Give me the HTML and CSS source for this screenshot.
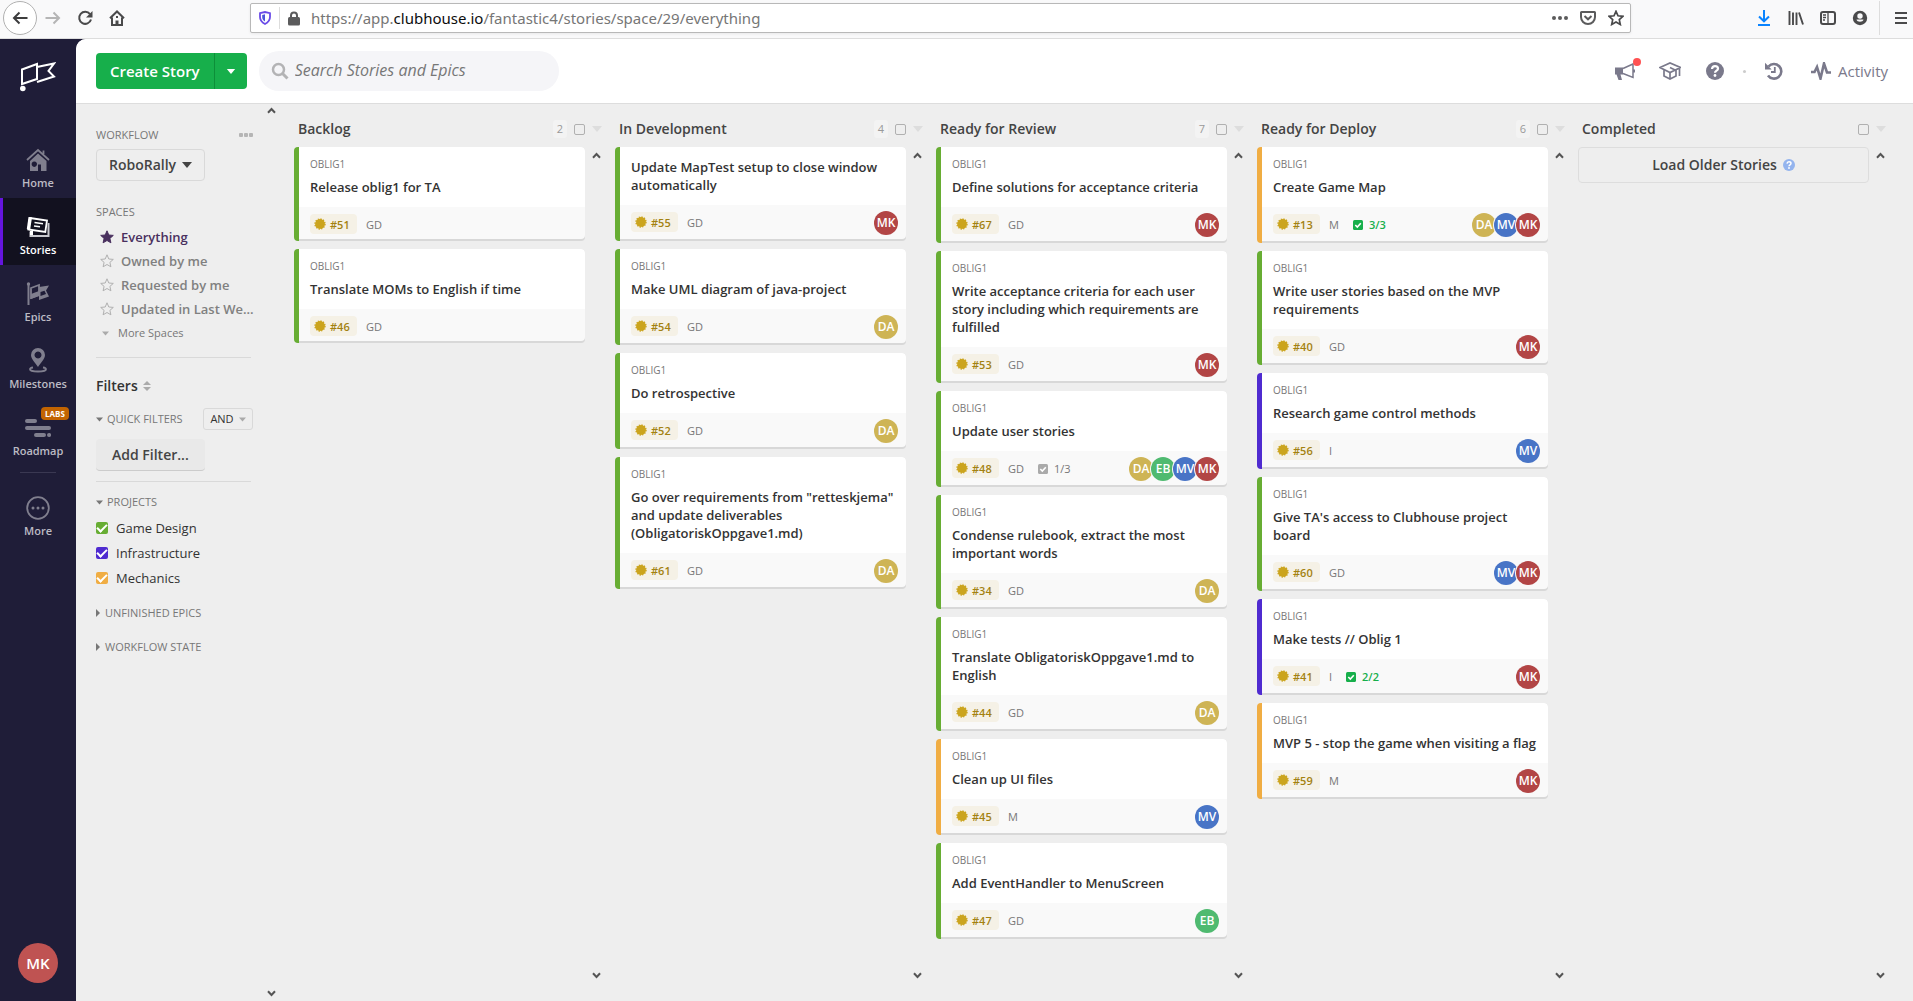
FILE: index.html
```html
<!DOCTYPE html>
<html lang="en">
<head>
<meta charset="utf-8">
<title>Stories | Clubhouse</title>
<link rel="stylesheet" href="styles.css">
</head>
<body>
<svg class="defs" aria-hidden="true">
  <symbol id="i-up" viewBox="0 0 9 7"><path d="M1 5.8 4.5 2 8 5.8" fill="none" stroke="currentColor" stroke-width="2"/></symbol>
  <symbol id="i-down" viewBox="0 0 9 7"><path d="M1 1.2 4.5 5 8 1.2" fill="none" stroke="currentColor" stroke-width="2"/></symbol>
  <symbol id="i-caret" viewBox="0 0 10 6"><path d="M0 0h10L5 6z" fill="currentColor"/></symbol>
  <symbol id="i-chore" viewBox="0 0 12 12"><circle cx="6" cy="6" r="4.9" fill="currentColor"/><circle cx="6" cy="6" r="5" fill="none" stroke="currentColor" stroke-width="1.4" stroke-dasharray="1.3 1.3"/></symbol>
  <symbol id="i-task" viewBox="0 0 10 10"><rect width="10" height="10" rx="1.5" fill="currentColor"/><path d="M2.3 5 4.3 7 7.8 3.2" fill="none" stroke="#fff" stroke-width="1.6"/></symbol>
  <symbol id="i-star" viewBox="0 0 14 14"><path d="M7 .8 8.800 5l4.500.4-3.400 3 1 4.400L7 10.500l-3.900 2.300 1-4.400-3.400-3L5.200 5z" stroke="currentColor"/></symbol>
</svg>

<div class="browser">
  <button class="bb back" aria-label="Back"><svg width="16" height="14" viewBox="0 0 16 14"><path d="M15.500 7H2M7.500 1.500 2 7l5.500 5.500" fill="none" stroke="#3d3d3e" stroke-width="2"/></svg></button>
  <button class="bb fwd" aria-label="Forward"><svg width="16" height="14" viewBox="0 0 16 14"><path d="M.5 7H14M8.500 1.500 14 7l-5.500 5.500" fill="none" stroke="#b5b5b5" stroke-width="2"/></svg></button>
  <button class="bb" aria-label="Reload"><svg width="16" height="16" viewBox="0 0 16 16"><path d="M13 4.200A6 6 0 1 0 14 9.500" fill="none" stroke="#4a4a4b" stroke-width="2"/><path d="M15.500 1v6.500H9z" fill="#4a4a4b"/></svg></button>
  <button class="bb" aria-label="Home page"><svg width="16" height="16" viewBox="0 0 16 16"><path d="M1 8.300 8 1.500l7 6.800M3 7.500V15h10V7.500" fill="none" stroke="#4a4a4b" stroke-width="2"/><path d="M6.500 15v-4.500h3V15zM7 6h2v2H7z" fill="#4a4a4b"/></svg></button>
  <div class="urlbar">
    <svg width="12" height="14" viewBox="0 0 12 14"><path d="M1 2.200 6 1l5 1.200V6c0 3.500-2 5.500-5 7-3-1.500-5-3.500-5-7z" fill="#fff" stroke="#6a4be8" stroke-width="1.800"/><path d="M6 3.300v7.300C4.300 9.500 3.200 8 3.200 6V3.900z" fill="#4b56d8"/></svg>
    <i class="vr"></i>
    <svg width="12" height="15" viewBox="0 0 12 15"><path d="M3 7V4.500a3 3 0 0 1 6 0V7" fill="none" stroke="#5b5b5c" stroke-width="2"/><rect y="6" width="12" height="8.500" rx="1.500" fill="#5b5b5c"/></svg>
    <span class="url">https://app.<b>clubhouse.io</b>/fantastic4/stories/space/29/everything</span>
    <span class="urlicons">
      <svg width="16" height="16" viewBox="0 0 16 16"><g fill="#5b5b5c"><circle cx="2" cy="8" r="2"/><circle cx="8" cy="8" r="2"/><circle cx="14" cy="8" r="2"/></g></svg>
      <svg width="16" height="16" viewBox="0 0 16 16"><path d="M1.500 2h13a.5.5 0 0 1 .5.500V7A7 7 0 0 1 1 7V2.500A.5.5 0 0 1 1.500 2zM4.500 6 8 9.300 11.500 6" fill="none" stroke="#5b5b5c" stroke-width="2"/></svg>
      <svg width="16" height="16" viewBox="0 0 16 16"><path d="m8 1.300 2 4.500 5 .5-3.700 3.300 1 4.900L8 12l-4.300 2.500 1-4.900L1 6.300l5-.5z" fill="none" stroke="#4a4a4b" stroke-width="1.700"/></svg>
    </span>
  </div>
  <div class="tools">
    <svg width="16" height="16" viewBox="0 0 16 16"><path d="M8 0v11M3 6.500 8 11.300l5-4.800M2 15h12" fill="none" stroke="#0a84ff" stroke-width="2"/></svg>
    <svg width="16" height="16" viewBox="0 0 16 16"><path d="M1.500 1v14M5 2.500V15M8.500 2.500V15M11 2.500 15 14.500" fill="none" stroke="#4a4a4b" stroke-width="1.900"/></svg>
    <svg width="16" height="16" viewBox="0 0 16 16"><rect x="1" y="2" width="14" height="12" rx="2" fill="none" stroke="#4a4a4b" stroke-width="2"/><path d="M8 2v12M3 5h3M3 7.500h3M3 10h2" stroke="#4a4a4b" stroke-width="1.300"/></svg>
    <svg width="16" height="16" viewBox="0 0 16 16"><circle cx="8" cy="8" r="7.200" fill="#4a4a4b"/><path d="M4.500 9.500h7c-.5 3-6.500 3-7 0z" fill="#f9f9fa"/><circle cx="8" cy="6" r="2.700" fill="#f9f9fa"/></svg>
    <i class="vr tall"></i>
    <svg width="12" height="14" viewBox="0 0 12 14"><path d="M0 2h12M0 7h12M0 12h12" stroke="#4a4a4b" stroke-width="2"/></svg>
  </div>
</div>

<div class="app">
  <nav class="nav">
    <a class="logo" href="#" aria-label="Clubhouse"><svg width="36" height="30" viewBox="0 0 36 30" fill="none" stroke="#fff" stroke-width="2"><path d="M2 7.500 17 2v15L2 22zM17 5l17-3.500-5.500 7.500 5.500 5.500-17 5.500"/><circle cx="2.800" cy="26.500" r="2.800" fill="#fff" stroke="none"/></svg></a>
    <a class="item" href="#"><svg width="24" height="24" viewBox="0 0 24 24"><path d="M1 12 12 2l11 10M17.500 6V2.500" fill="none" stroke="currentColor" stroke-width="1.800"/><path fill-rule="evenodd" d="M12 5.500 20.500 13v10h-5.500v-6.500h-3V23H4V13zM8.300 13.500a2.700 2.700 0 1 0 .01 0z" fill="currentColor"/></svg>Home</a>
    <a class="item on" href="#"><svg width="24" height="24" viewBox="0 0 24 24"><path d="M4 3 21 5.500 19.300 17 2.300 14.500z" fill="none" stroke="#fff" stroke-width="1.800"/><path d="M2.500 2 .8 14 4 15.500 6 2.500z" fill="#fff"/><path d="m8.500 7.500 8.500 1.200M8 11l6 .8" stroke="#fff" stroke-width="1.600"/><path d="M4.500 16.500V21h18V8" fill="none" stroke="#c9c9cf" stroke-width="2"/><path d="M4 16h3v4H4z" fill="#fff"/></svg>Stories</a>
    <a class="item" href="#"><svg width="24" height="24" viewBox="0 0 24 24"><path d="M2.500 1v22" stroke="currentColor" stroke-width="2"/><circle cx="2.500" cy="2" r="1.700" fill="currentColor"/><path d="m5 6 8-3v10l-8 3z" fill="none" stroke="currentColor" stroke-width="1.800"/><path d="m5 12 8-3v5l-8 3zM13 5l10-1.500-3 5 3 6-10 3.500z" fill="currentColor"/><path d="m14.500 10 4-1.300 1.500 3.300-5.500 2z" fill="#1f1d38"/></svg>Epics</a>
    <a class="item" href="#"><svg width="24" height="26" viewBox="0 0 24 26"><path fill-rule="evenodd" d="M12 1a7 7 0 0 1 7 7c0 4-4.500 8-7 12-2.500-4-7-8-7-12a7 7 0 0 1 7-7zm0 3.500a3.500 3.500 0 1 0 .01 0z" fill="currentColor"/><path d="M7 20.500c-2 .3-3 1-3 1.700 0 1.300 3.500 2.300 8 2.300s8-1 8-2.300c0-.7-1-1.400-3-1.700" fill="none" stroke="currentColor" stroke-width="1.800"/></svg>Milestones</a>
    <a class="item" href="#"><svg width="26" height="24" viewBox="0 0 26 24"><path d="M2 5h8M2 12h22M11 19h8M24 19h.1" stroke="currentColor" stroke-width="4" stroke-linecap="round"/></svg>Roadmap<span class="labs">LABS</span></a>
    <hr>
    <a class="item more" href="#"><svg width="24" height="24" viewBox="0 0 24 24"><circle cx="12" cy="12" r="10.800" fill="none" stroke="currentColor" stroke-width="1.800"/><g fill="currentColor"><circle cx="7" cy="12" r="1.500"/><circle cx="12" cy="12" r="1.500"/><circle cx="17" cy="12" r="1.500"/></g></svg>More</a>
    <button class="me">MK</button>
  </nav>

  <div class="main">
    <header class="top">
      <div class="create"><button>Create Story</button><button aria-label="More create options"><svg width="10" height="5"><use href="#i-caret"/></svg></button></div>
      <label class="search"><svg width="18" height="18" viewBox="0 0 18 18"><circle cx="7.500" cy="7.500" r="5.500" fill="none" stroke="#b3b3b5" stroke-width="2.500"/><path d="m11.500 11.500 5 5" stroke="#b3b3b5" stroke-width="3"/></svg><input type="search" placeholder="Search Stories and Epics" aria-label="Search Stories and Epics"></label>
      <div class="actions">
        <button class="mega" aria-label="News"><svg width="22" height="20" viewBox="0 0 22 20"><path d="M1 6.500h8v7H6.500l1.500 5.500H4.500l-2-5.500H1z" fill="currentColor"/><path d="M9 7.500 19 3v13.500L9 12.500" fill="none" stroke="currentColor" stroke-width="1.500"/><path d="M19 8.500h2v3h-2z" fill="currentColor"/></svg><i></i></button>
        <button aria-label="Learn"><svg width="22" height="20" viewBox="0 0 22 20" fill="none" stroke="currentColor" stroke-width="1.700"><path d="M1 6.500 11 2l10.500 4.500L11 11.500zM5 9v6l6 3 6-3V9M11 6.500l5 2.500M20.500 7v8"/><path d="m11 12v5"/></svg></button>
        <button aria-label="Help"><svg width="18" height="18" viewBox="0 0 18 18"><circle cx="9" cy="9" r="9" fill="currentColor"/><path d="M6 7c.2-2 1.500-2.800 3-2.800 1.700 0 3 1 3 2.500C12 8.700 9 8.700 9 10.800" fill="none" stroke="#fff" stroke-width="2.200"/><circle cx="9" cy="13.500" r="1.400" fill="#fff"/></svg></button>
        <i class="sep"></i>
        <button aria-label="History"><svg width="18" height="18" viewBox="0 0 18 18"><path d="M3.500 4.500A7.300 7.300 0 1 1 3 13.500" fill="none" stroke="currentColor" stroke-width="2.600"/><path d="M0 .8v6.700h6.700z" fill="currentColor"/><path d="M9.800 5v5H6" fill="none" stroke="currentColor" stroke-width="1.800"/></svg></button>
        <button class="activity"><svg width="20" height="18" viewBox="0 0 20 18"><path d="M0 10h3.500L6 5l3.500 11.500L13 1.500l3 9h4" fill="none" stroke="currentColor" stroke-width="2.600"/></svg>Activity</button>
      </div>
    </header>

    <div class="work">
      <aside class="side">
        <div class="panel">
          <div class="row h"><h2>Workflow</h2><button class="dots" aria-label="Workflow options"><i></i><i></i><i></i></button></div>
          <button class="wf">RoboRally <svg width="10" height="6"><use href="#i-caret"/></svg></button>
          <h2 class="sp">Spaces</h2>
          <a class="space cur" href="#"><svg width="14" height="14"><use href="#i-star"/></svg>Everything</a>
          <a class="space" href="#"><svg width="14" height="14"><use href="#i-star"/></svg>Owned by me</a>
          <a class="space" href="#"><svg width="14" height="14"><use href="#i-star"/></svg>Requested by me</a>
          <a class="space" href="#"><svg width="14" height="14"><use href="#i-star"/></svg>Updated in Last We...</a>
          <a class="morespaces" href="#"><svg width="7" height="5"><use href="#i-caret"/></svg>More Spaces</a>
          <hr>
          <h1>Filters <svg width="8" height="10" viewBox="0 0 8 10"><path d="M0 4h8L4 0zM0 6h8l-4 4z" fill="#aaa"/></svg></h1>
          <div class="row q"><h2><svg width="7" height="5"><use href="#i-caret"/></svg>Quick Filters</h2><button class="and">AND <svg width="7" height="5"><use href="#i-caret"/></svg></button></div>
          <button class="addf">Add Filter...</button>
          <hr>
          <h2 class="fold"><svg width="7" height="5"><use href="#i-caret"/></svg>Projects</h2>
          <label class="proj green"><input type="checkbox" checked>Game Design</label>
          <label class="proj purple"><input type="checkbox" checked>Infrastructure</label>
          <label class="proj orange"><input type="checkbox" checked>Mechanics</label>
          <h2 class="fold shut"><svg width="4" height="8" viewBox="0 0 4 8"><path d="M0 0v8l4-4z" fill="currentColor"/></svg>Unfinished Epics</h2>
          <h2 class="fold shut"><svg width="4" height="8" viewBox="0 0 4 8"><path d="M0 0v8l4-4z" fill="currentColor"/></svg>Workflow State</h2>
        </div>
        <div class="rail"><svg width="9" height="7"><use href="#i-up"/></svg><svg width="9" height="7"><use href="#i-down"/></svg></div>
      </aside>

      <main class="board">
        <section class="col">
          <div class="head"><h3>Backlog</h3><span class="n">2</span><input type="checkbox" aria-label="Select all in Backlog"><svg width="10" height="6"><use href="#i-caret"/></svg></div>
          <div class="list">
            <div class="cards">
              <article class="card g"><div class="body"><p class="epic">OBLIG1</p><h4>Release oblig1 for TA</h4></div><div class="foot"><span class="id"><svg><use href="#i-chore"/></svg>#51</span><span class="pr">GD</span></div></article>
              <article class="card g"><div class="body"><p class="epic">OBLIG1</p><h4>Translate MOMs to English if time</h4></div><div class="foot"><span class="id"><svg><use href="#i-chore"/></svg>#46</span><span class="pr">GD</span></div></article>
            </div>
            <div class="rail"><svg width="9" height="7"><use href="#i-up"/></svg><svg width="9" height="7"><use href="#i-down"/></svg></div>
          </div>
        </section>

        <section class="col">
          <div class="head"><h3>In Development</h3><span class="n">4</span><input type="checkbox" aria-label="Select all in In Development"><svg width="10" height="6"><use href="#i-caret"/></svg></div>
          <div class="list">
            <div class="cards">
              <article class="card g"><div class="body"><h4>Update MapTest setup to close window automatically</h4></div><div class="foot"><span class="id"><svg><use href="#i-chore"/></svg>#55</span><span class="pr">GD</span><span class="who"><b class="mk">MK</b></span></div></article>
              <article class="card g"><div class="body"><p class="epic">OBLIG1</p><h4>Make UML diagram of java-project</h4></div><div class="foot"><span class="id"><svg><use href="#i-chore"/></svg>#54</span><span class="pr">GD</span><span class="who"><b class="da">DA</b></span></div></article>
              <article class="card g"><div class="body"><p class="epic">OBLIG1</p><h4>Do retrospective</h4></div><div class="foot"><span class="id"><svg><use href="#i-chore"/></svg>#52</span><span class="pr">GD</span><span class="who"><b class="da">DA</b></span></div></article>
              <article class="card g"><div class="body"><p class="epic">OBLIG1</p><h4>Go over requirements from "retteskjema" and update deliverables (ObligatoriskOppgave1.md)</h4></div><div class="foot"><span class="id"><svg><use href="#i-chore"/></svg>#61</span><span class="pr">GD</span><span class="who"><b class="da">DA</b></span></div></article>
            </div>
            <div class="rail"><svg width="9" height="7"><use href="#i-up"/></svg><svg width="9" height="7"><use href="#i-down"/></svg></div>
          </div>
        </section>

        <section class="col">
          <div class="head"><h3>Ready for Review</h3><span class="n">7</span><input type="checkbox" aria-label="Select all in Ready for Review"><svg width="10" height="6"><use href="#i-caret"/></svg></div>
          <div class="list">
            <div class="cards">
              <article class="card g"><div class="body"><p class="epic">OBLIG1</p><h4>Define solutions for acceptance criteria</h4></div><div class="foot"><span class="id"><svg><use href="#i-chore"/></svg>#67</span><span class="pr">GD</span><span class="who"><b class="mk">MK</b></span></div></article>
              <article class="card g"><div class="body"><p class="epic">OBLIG1</p><h4>Write acceptance criteria for each user story including which requirements are fulfilled</h4></div><div class="foot"><span class="id"><svg><use href="#i-chore"/></svg>#53</span><span class="pr">GD</span><span class="who"><b class="mk">MK</b></span></div></article>
              <article class="card g"><div class="body"><p class="epic">OBLIG1</p><h4>Update user stories</h4></div><div class="foot"><span class="id"><svg><use href="#i-chore"/></svg>#48</span><span class="pr">GD</span><span class="tasks"><svg><use href="#i-task"/></svg>1/3</span><span class="who"><b class="da">DA</b><b class="eb">EB</b><b class="mv">MV</b><b class="mk">MK</b></span></div></article>
              <article class="card g"><div class="body"><p class="epic">OBLIG1</p><h4>Condense rulebook, extract the most important words</h4></div><div class="foot"><span class="id"><svg><use href="#i-chore"/></svg>#34</span><span class="pr">GD</span><span class="who"><b class="da">DA</b></span></div></article>
              <article class="card g"><div class="body"><p class="epic">OBLIG1</p><h4>Translate ObligatoriskOppgave1.md to English</h4></div><div class="foot"><span class="id"><svg><use href="#i-chore"/></svg>#44</span><span class="pr">GD</span><span class="who"><b class="da">DA</b></span></div></article>
              <article class="card m"><div class="body"><p class="epic">OBLIG1</p><h4>Clean up UI files</h4></div><div class="foot"><span class="id"><svg><use href="#i-chore"/></svg>#45</span><span class="pr">M</span><span class="who"><b class="mv">MV</b></span></div></article>
              <article class="card g"><div class="body"><p class="epic">OBLIG1</p><h4>Add EventHandler to MenuScreen</h4></div><div class="foot"><span class="id"><svg><use href="#i-chore"/></svg>#47</span><span class="pr">GD</span><span class="who"><b class="eb">EB</b></span></div></article>
            </div>
            <div class="rail"><svg width="9" height="7"><use href="#i-up"/></svg><svg width="9" height="7"><use href="#i-down"/></svg></div>
          </div>
        </section>

        <section class="col">
          <div class="head"><h3>Ready for Deploy</h3><span class="n">6</span><input type="checkbox" aria-label="Select all in Ready for Deploy"><svg width="10" height="6"><use href="#i-caret"/></svg></div>
          <div class="list">
            <div class="cards">
              <article class="card m"><div class="body"><p class="epic">OBLIG1</p><h4>Create Game Map</h4></div><div class="foot"><span class="id"><svg><use href="#i-chore"/></svg>#13</span><span class="pr">M</span><span class="tasks done"><svg><use href="#i-task"/></svg>3/3</span><span class="who"><b class="da">DA</b><b class="mv">MV</b><b class="mk">MK</b></span></div></article>
              <article class="card g"><div class="body"><p class="epic">OBLIG1</p><h4>Write user stories based on the MVP requirements</h4></div><div class="foot"><span class="id"><svg><use href="#i-chore"/></svg>#40</span><span class="pr">GD</span><span class="who"><b class="mk">MK</b></span></div></article>
              <article class="card i"><div class="body"><p class="epic">OBLIG1</p><h4>Research game control methods</h4></div><div class="foot"><span class="id"><svg><use href="#i-chore"/></svg>#56</span><span class="pr">I</span><span class="who"><b class="mv">MV</b></span></div></article>
              <article class="card g"><div class="body"><p class="epic">OBLIG1</p><h4>Give TA's access to Clubhouse project board</h4></div><div class="foot"><span class="id"><svg><use href="#i-chore"/></svg>#60</span><span class="pr">GD</span><span class="who"><b class="mv">MV</b><b class="mk">MK</b></span></div></article>
              <article class="card i"><div class="body"><p class="epic">OBLIG1</p><h4>Make tests // Oblig 1</h4></div><div class="foot"><span class="id"><svg><use href="#i-chore"/></svg>#41</span><span class="pr">I</span><span class="tasks done"><svg><use href="#i-task"/></svg>2/2</span><span class="who"><b class="mk">MK</b></span></div></article>
              <article class="card m"><div class="body"><p class="epic">OBLIG1</p><h4>MVP 5 - stop the game when visiting a flag</h4></div><div class="foot"><span class="id"><svg><use href="#i-chore"/></svg>#59</span><span class="pr">M</span><span class="who"><b class="mk">MK</b></span></div></article>
            </div>
            <div class="rail"><svg width="9" height="7"><use href="#i-up"/></svg><svg width="9" height="7"><use href="#i-down"/></svg></div>
          </div>
        </section>

        <section class="col">
          <div class="head"><h3>Completed</h3><input type="checkbox" aria-label="Select all in Completed"><svg width="10" height="6"><use href="#i-caret"/></svg></div>
          <div class="list">
            <div class="cards"><button class="older">Load Older Stories <svg width="12" height="12" viewBox="0 0 18 18"><circle cx="9" cy="9" r="9" fill="#94b4ee"/><path d="M6 7c.2-2 1.500-2.800 3-2.800 1.700 0 3 1 3 2.500C12 8.700 9 8.700 9 10.800" fill="none" stroke="#fff" stroke-width="2.200"/><circle cx="9" cy="13.500" r="1.400" fill="#fff"/></svg></button></div>
            <div class="rail"><svg width="9" height="7"><use href="#i-up"/></svg><svg width="9" height="7"><use href="#i-down"/></svg></div>
          </div>
        </section>
      </main>
    </div>
  </div>
</div>
</body>
</html>
```
FILE: styles.css
```css
* { box-sizing: border-box; }
html, body { height: 100%; margin: 0; }
body {
  display: flex;
  flex-direction: column;
  min-height: 100vh;
  font-family: "Open Sans", "Noto Sans", sans-serif;
  font-size: 13px;
  line-height: 18px;
  color: #333;
  background: #1f1d38;
}
h1, h2, h3, h4, p { margin: 0; font-weight: 400; }
button { font: inherit; color: inherit; border: 0; padding: 0; background: none; display: flex; align-items: center; justify-content: center; }
a { color: inherit; text-decoration: none; }
svg { flex: none; display: block; }
hr { border: 0; border-top: 1px solid #d9d9d9; margin: 0; }
.defs { position: absolute; width: 0; height: 0; }

/* browser toolbar */
.browser { display: flex; align-items: center; height: 39px; padding: 0 6px 2px 3px; background: #f9f9fa; border-bottom: 1px solid #ddd; flex: none; }
.bb { width: 32px; height: 34px; }
.bb.back { width: 34px; border: 1px solid #b1b1b1; border-radius: 50%; background: #fff; }
.urlbar { display: flex; align-items: center; flex: 1; height: 30px; margin: 0 125px 0 117px; padding: 0 6px 0 8px; border: 1px solid #b8b8b8; border-radius: 2px; background: #fff; box-shadow: 0 1px 3px #0001; }
.vr { width: 1px; height: 22px; margin: 0 8px; background: #ddd; }
.vr.tall { height: 34px; margin: 0; }
.url { margin-left: 11px; flex: 1; font: 15px/20px "Noto Sans", sans-serif; color: #767676; }
.url b { font-weight: 400; color: #0c0c0d; }
.urlicons { display: flex; gap: 12px; }
.tools { display: flex; align-items: center; gap: 16px; }
.tools .vr { margin-right: -1px; margin-left: -5px; }

.app { display: flex; flex: 1; min-height: 0; }

/* left navigation */
.nav { display: flex; flex-direction: column; width: 76px; flex: none; color: #bcbbc4; font-size: 11px; font-weight: 600; line-height: 14px; }
.logo { display: flex; justify-content: center; padding: 23px 0 39px; }
.item { position: relative; display: flex; flex-direction: column; align-items: center; justify-content: flex-end; height: 67px; padding-bottom: 8px; gap: 4px; color: #bcbbc4; }
.item svg { color: #807f8e; }
.item.on { background: #12111f; color: #fff; box-shadow: inset 3px 0 #6515dd; }
.labs { position: absolute; top: 8px; left: 41px; padding: 0 4px; border-radius: 4px; background: #c26401; color: #fff; font-size: 8px; line-height: 13px; font-weight: 700; }
.nav hr { width: 36px; margin: 6px auto; border-color: #3a3852; }
.me { width: 40px; height: 40px; margin: auto auto 18px; border-radius: 50%; background: #bf5352; color: #fff; font-size: 15px; }

/* header */
.main { display: flex; flex-direction: column; flex: 1; min-width: 0; background: #eee; border-top-left-radius: 10px; overflow: hidden; }
.top { display: flex; align-items: center; height: 65px; flex: none; padding: 0 25px 0 20px; background: #fff; border-bottom: 1px solid #ddd; }
.create { display: flex; }
.create button { height: 36px; padding: 0 14px; background: #17af4b; color: #fff; font-size: 15px; font-weight: 600; border-radius: 4px 0 0 4px; }
.create button + button { padding: 0 11px; border-left: 1px solid #0d8f39; border-radius: 0 4px 4px 0; }
.search { display: flex; align-items: center; gap: 6px; width: 300px; height: 40px; margin-left: 12px; padding: 0 12px; border-radius: 20px; background: #f5f5f8; }
.search input { flex: 1; min-width: 0; padding: 0 0 2px; border: 0; outline: 0; background: none; font: italic 16px/20px "Open Sans", sans-serif; color: #333; }
.search input::placeholder { color: #777; opacity: 1; }
.actions { display: flex; align-items: center; gap: 25px; margin-left: auto; color: #7a798b; }
.mega { position: relative; margin-right: -2px; }
.mega i { position: absolute; top: -3px; right: -5px; width: 8px; height: 8px; border-radius: 50%; background: #ff5252; }
.sep { width: 3px; height: 3px; margin: 0 -6px; border-radius: 50%; background: #ccc; }
.activity { gap: 7px; font-size: 15px; margin-left: 3px; }

/* filter panel */
.work { display: flex; flex: 1; min-height: 0; }
.side { display: flex; justify-content: space-between; width: 202px; flex: none; }
.panel { width: 157px; margin-left: 20px; padding-top: 23px; }
.panel hr { width: 155px; }
.panel h2 { display: flex; align-items: center; gap: 4px; font-size: 11px; line-height: 16px; color: #777; text-transform: uppercase; }
.row { display: flex; align-items: center; justify-content: space-between; }
.dots { gap: 1px; }
.dots i { width: 4px; height: 4px; background: #b5b5b5; border-radius: 1px; }
.wf { height: 32px; margin-top: 6px; padding: 0 12px; gap: 6px; border: 1px solid #d9d9d9; border-radius: 4px; font-size: 14px; font-weight: 600; color: #444; }
.panel .sp { margin: 23px 0 5px; }
.space { display: flex; align-items: center; gap: 7px; height: 24px; padding-left: 4px; font-weight: 600; color: #808080; white-space: nowrap; }
.space svg { fill: none; color: #b0b0b0; }
.space.cur { color: #49305e; }
.space.cur svg { fill: currentColor; color: inherit; }
.morespaces { display: flex; align-items: center; gap: 9px; height: 24px; padding-left: 6px; font-size: 11px; color: #777; }
.morespaces svg, .and svg { color: #aaa; }
.morespaces + hr { margin-top: 12px; }
.panel h1 { display: flex; align-items: center; gap: 5px; margin-top: 18px; font-size: 14px; line-height: 20px; font-weight: 600; }
.q { margin-top: 12px; }
.and { width: 50px; height: 22px; gap: 5px; border: 1px solid #d9d9d9; border-radius: 3px; font-size: 11px; }
.addf { height: 32px; margin: 9px 0 10px; padding: 0 16px; border-radius: 4px; background: #e9e9e9; border-bottom: 1px solid #ccc; font-size: 14px; font-weight: 600; color: #444; }
.panel .fold { margin: 12px 0 5px; }
.panel .shut { margin: 18px 0 0; gap: 5px; }
.panel .proj + .shut { margin-top: 15px; }
.proj { display: flex; align-items: center; gap: 8px; height: 25px; }
.proj input { display: flex; align-items: center; justify-content: center; appearance: none; width: 12px; height: 12px; margin: 0; border-radius: 2px; background: #67ad33; }
.proj input:checked::after { content: ""; width: 8px; height: 4px; margin-top: -2px; border: solid #fff; border-width: 0 0 2px 2px; rotate: -45deg; }
.purple input { background: #4f2bd0; }
.orange input { background: #f0ad43; }
.rail { display: flex; flex-direction: column; justify-content: space-between; align-items: center; flex: none; color: #555; }
.side .rail { width: 13px; padding: 3px 0 4px; }

/* board */
.board { display: flex; flex: 1; min-width: 0; margin: 0 14px 0 16px; }
.col { display: flex; flex-direction: column; flex: 1 1 0; min-width: 0; padding-top: 13px; }
.head { display: flex; align-items: center; height: 24px; margin-bottom: 6px; padding: 0 13px 0 4px; }
.head h3 { flex: 1; font-size: 14px; font-weight: 600; color: #444; }
.head svg { margin-left: 7px; color: #ddd; }
.head input { appearance: none; width: 11px; height: 11px; margin: 0; border: 1px solid #b0b0b0; border-radius: 2px; }
.n { width: 14px; margin-right: 7px; border-radius: 3px; background: #f3f3f3; font-size: 11px; color: #999; text-align: center; }
.list { display: flex; flex: 1; margin-bottom: 17px; }
.list .rail { width: 30px; padding: 5px 7px 5px 0; }
.cards { flex: 1; min-width: 0; }
.card { margin-bottom: 8px; padding-bottom: 2px; border-left: 5px solid #67ad33; border-radius: 4px; background: #d8d8d8; overflow: hidden; }
.card.m { border-left-color: #f0ad43; }
.card.i { border-left-color: #4f2bd0; }
.body { padding: 11px 8px 11px 11px; background: #fff; }
.epic { margin-bottom: 8px; font-size: 10px; line-height: 12px; color: #777; }
.card h4 { font-size: 13px; line-height: 18px; font-weight: 600; color: #333; }
.foot { display: flex; align-items: flex-start; min-height: 32px; padding: 6px 8px 4px 11px; background: #f9f9f9; border-radius: 0 0 4px 0; font-size: 11px; line-height: 20px; }
.id { display: flex; align-items: center; gap: 4px; width: 47px; height: 20px; margin-top: 1px; padding: 2px 0 0 4px; border-radius: 4px; background: #f5f1e6; color: #a38110; font-weight: 600; }
.id svg { width: 12px; height: 12px; margin-top: -2px; color: #cba41d; }
.pr { margin: 2px 0 0 9px; color: #777; }
.tasks { display: flex; align-items: center; gap: 6px; margin: 2px 0 0 14px; color: #777; }
.tasks svg { width: 10px; height: 10px; color: #aaa; }
.tasks.done { color: #17af4b; font-weight: 600; }
.tasks.done svg { color: #17af4b; }
.who { display: flex; margin-left: auto; }
.who b { width: 24px; height: 24px; margin-left: -2px; border-radius: 50%; font-size: 12px; line-height: 24px; font-weight: 600; color: #fff; text-align: center; box-shadow: 0 0 0 1px #f9f9f9; }
.mk { background: #b24545; }
.da { background: #ceb455; }
.eb { background: #4fba70; }
.mv { background: #4874c6; }
.older { width: 100%; height: 36px; gap: 6px; border: 1px solid #ddd; border-radius: 4px; font-size: 14px; font-weight: 600; color: #444; }
```
